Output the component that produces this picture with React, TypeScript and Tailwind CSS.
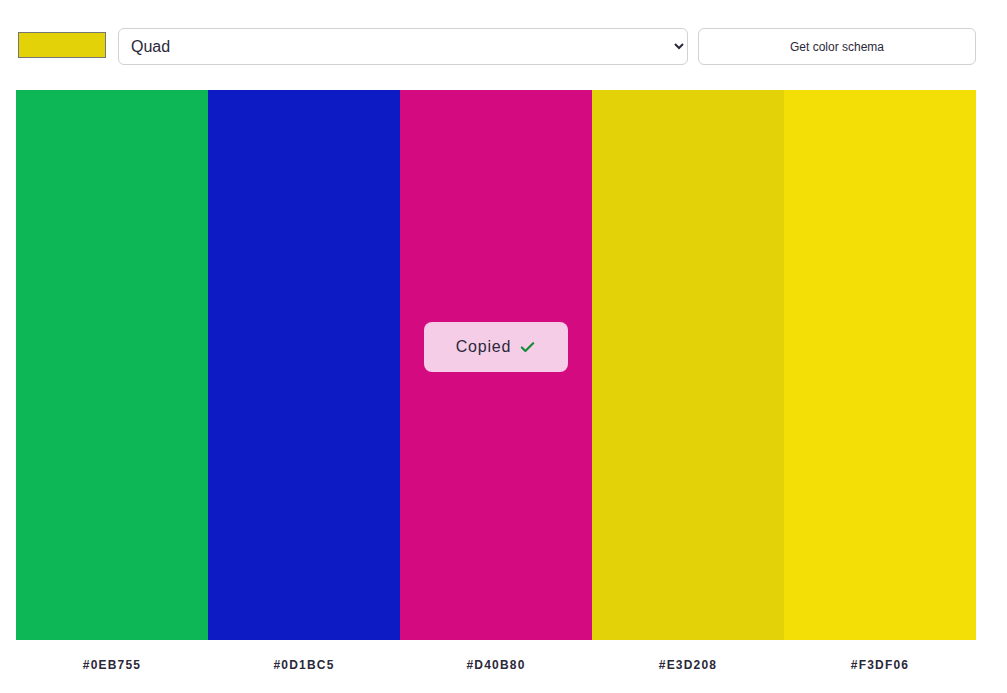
import { Check } from "lucide-react";

const colors = ["#0EB755", "#0D1BC5", "#D40B80", "#E3D208", "#F3DF06"];

export default function App() {
  return (
    <div className="w-[960px] ml-4 font-['Liberation_Sans',Arial,sans-serif] text-[#2b283a]">
      <div className="flex items-center h-[90px] pt-[3px]">
        <div className="w-[88px] h-[26px] ml-[2px] -mt-[3px] border border-[#767676] bg-[#E3D208]"></div>
        <select
          defaultValue="quad"
          className="ml-3 w-[570px] h-[37px] border border-[#d1d1d6] rounded-md pl-2 text-base bg-white"
        >
          <option value="mono">Monochrome</option>
          <option value="quad">Quad</option>
        </select>
        <button className="ml-[10px] w-[278px] h-[37px] border border-[#d1d1d6] rounded-md text-xs bg-white">
          Get color schema
        </button>
      </div>
      <div className="flex">
        {colors.map((c, i) => (
          <div key={c} className="flex-1 flex flex-col">
            <div className="h-[550px] flex items-center justify-center" style={{ backgroundColor: c }}>
              {i === 2 && (
                <div className="w-36 h-[50px] -mt-[36px] rounded-lg bg-[#f5cde6] flex items-center justify-center gap-2 text-base tracking-wider">
                  Copied
                  <Check size={17} strokeWidth={3} className="text-[#138a36]" />
                </div>
              )}
            </div>
            <div className="h-[50px] flex items-center justify-center text-xs font-bold tracking-[0.1em]">
              {c}
            </div>
          </div>
        ))}
      </div>
    </div>
  );
}
